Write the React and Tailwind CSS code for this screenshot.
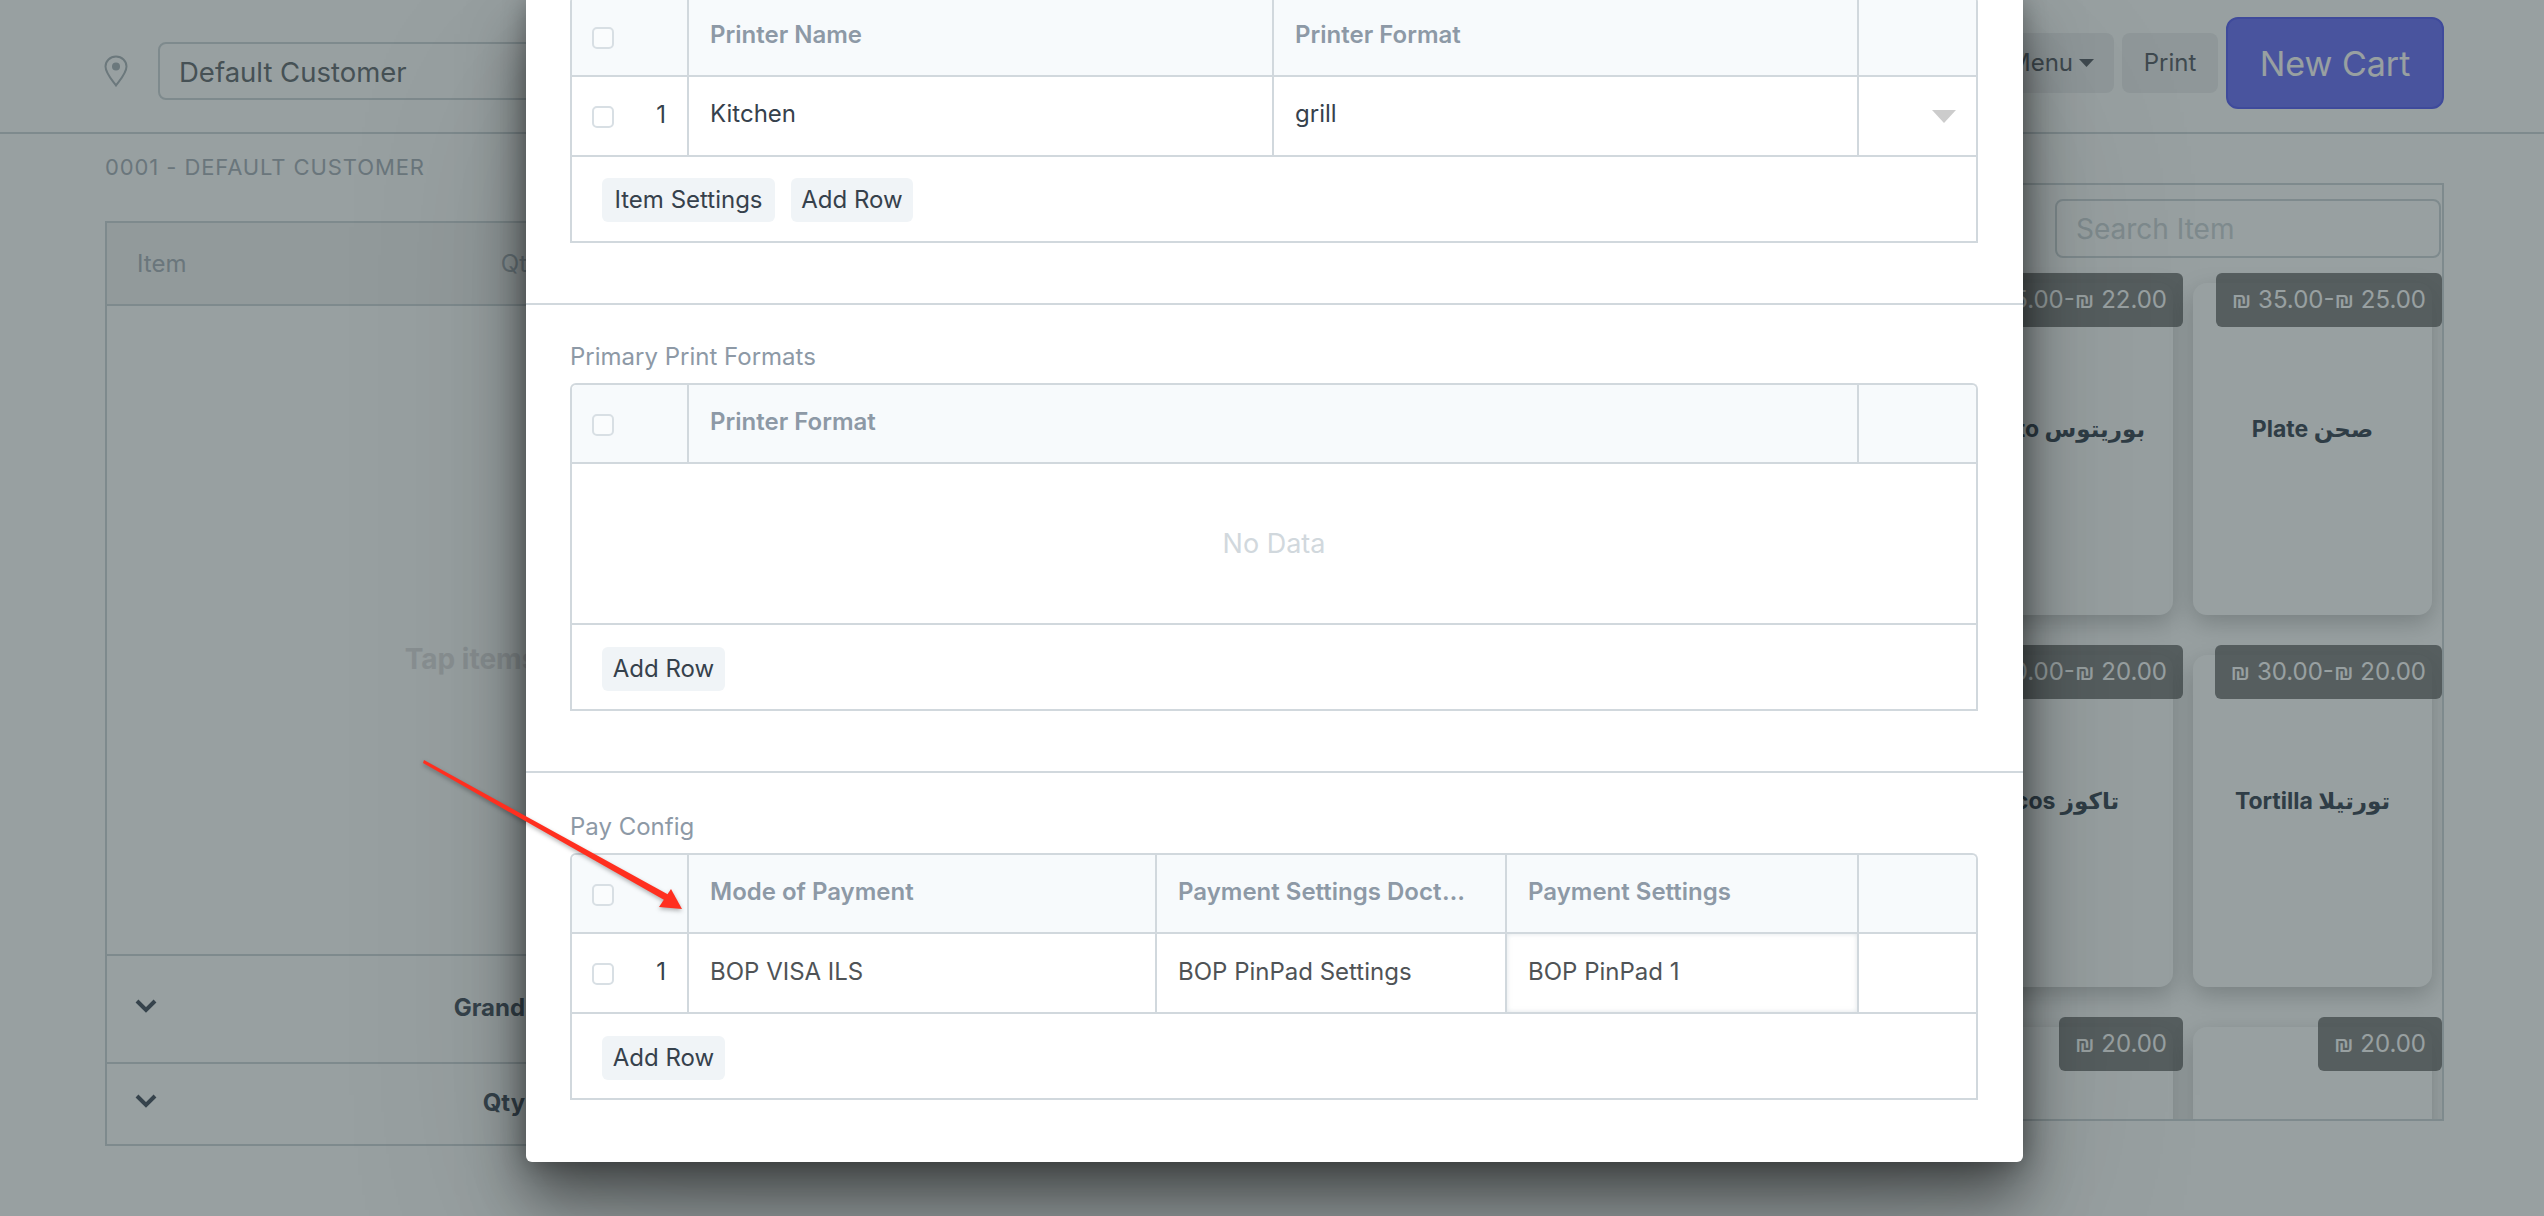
const rows = [
  ["₪ 35.00-₪ 22.00", "Burrito بوريتوس", "₪ 35.00-₪ 25.00", "Plate صحن"],
  ["₪ 30.00-₪ 20.00", "Tacos تاكوز", "₪ 30.00-₪ 20.00", "Tortilla تورتيلا"],
  ["₪ 20.00", "", "₪ 20.00", ""],
];

function Checkbox() {
  return <span className="block mt-[2px] w-[22px] h-[22px] rounded-[5px] border-2 border-[#d8dfe4] bg-white/40" />;
}

function HeaderCell({ width, children }) {
  return (
    <div style={{ width }} className="shrink-0 flex items-center pl-[21px] pr-[34px] pb-[4px] border-r-2 border-[#d1d8dd] font-semibold text-[#8d99a6]">
      <span className="truncate">{children}</span>
    </div>
  );
}

function BodyCell({ width, children, dark, focused }) {
  return (
    <div
      style={{ width }}
      className={`shrink-0 flex items-center px-[21px] border-r-2 border-[#d1d8dd] ${dark ? "pb-[4px] text-[#36414c]" : "pb-[2px] text-[#4f5356]"} ${focused ? "shadow-[inset_0_0_5px_rgba(209,216,221,0.7)]" : ""}`}
    >
      <span className="truncate">{children}</span>
    </div>
  );
}

function GridTable({ cols, headers, row, dark, children, footer }) {
  return (
    <div className="text-[24px]">
      <div className="rounded-t-[6px] border-2 border-b-0 border-[#d1d8dd]">
        <div className="flex h-[79px] bg-[#f7fafc] border-b-2 border-[#d1d8dd] rounded-t-[5px]">
          <div className="w-[117px] shrink-0 flex items-center pl-[20px] border-r-2 border-[#d1d8dd]">
            <Checkbox />
          </div>
          {headers.map((h, i) => (
            <HeaderCell key={h} width={cols[i]}>{h}</HeaderCell>
          ))}
          <div className="flex-1" />
        </div>
        {row && (
          <div className="flex h-[80px] border-b-2 border-[#d1d8dd]">
            <div className="w-[117px] shrink-0 flex items-center justify-between pl-[20px] pr-[21px] border-r-2 border-[#d1d8dd] text-[#36414c]">
              <Checkbox />
              <span className="pb-[2px]">1</span>
            </div>
            {row.map((c, i) => (
              <BodyCell key={c} width={cols[i]} dark={dark} focused={!dark && i === 2}>{c}</BodyCell>
            ))}
            <div className="flex-1 flex items-center justify-end pr-[20px]">
              {dark && (
                <svg width="24" height="13" viewBox="0 0 24 13">
                  <path d="M0 0h24L12 13z" fill="#cccccc" />
                </svg>
              )}
            </div>
          </div>
        )}
        {children}
      </div>
      <div className={`h-[86px] pl-[30px] flex gap-[16px] items-start border-2 border-t-0 border-[#d1d8dd] ${dark ? "pt-[21px]" : "pt-[22px]"}`}>
        {footer.map((b) => (
          <button key={b.label} style={{ width: b.width }} className="h-[44px] rounded-[6px] bg-[#f0f4f7] text-[#36414c] text-[24px] whitespace-nowrap">{b.label}</button>
        ))}
      </div>
    </div>
  );
}

function Card({ price, name }) {
  return (
    <div className="relative w-[239px] h-[332px] shrink-0 rounded-[14px] bg-white shadow-[0_8px_24px_rgba(0,0,0,0.22)]">
      <div className="absolute -top-[10px] -right-[10px] h-[54px] px-[16px] flex items-center rounded-[6px] bg-[#707070]/80 text-white text-[24px] whitespace-nowrap">
        {price}
      </div>
      <div className="pt-[129px] text-center font-bold text-[23px] text-[#4b5563]">{name}</div>
    </div>
  );
}

function Chevron() {
  return (
    <svg width="22" height="14" viewBox="0 0 22 14" className="shrink-0 mb-[4px]">
      <path d="M2 2l9 9 9-9" fill="none" stroke="currentColor" strokeWidth="4" />
    </svg>
  );
}

export default function App() {
  return (
    <div className="relative h-screen overflow-hidden bg-white font-[Inter,'DejaVu_Sans',sans-serif]">
      {/* page under the dialog */}
      <div className="flex items-center h-[134px] pl-[104px] pr-[100px] border-b-2 border-[#d2d9dc]">
        <div className="flex items-center mt-[10px]">
          <svg width="24" height="32" viewBox="0 0 24 32" className="shrink-0 text-[#b2babf]">
            <path d="M12 1.5C6 1.5 1.5 6 1.5 11.5 1.5 18 8 25 12 30.5 16 25 22.5 18 22.5 11.5 22.5 6 18 1.5 12 1.5z" fill="none" stroke="currentColor" strokeWidth="2" />
            <circle cx="12" cy="11.5" r="4" fill="currentColor" />
          </svg>
          <div className="ml-[30px] w-[800px] h-[58px] flex items-center px-[19px] pt-[3px] rounded-[8px] border-2 border-[#d2d9dc] text-[27.5px] text-[#72777c]">Default Customer</div>
        </div>
        <div className="flex-1" />
        <div className="flex items-center mb-[6px]">
          <button className="h-[60px] px-[20px] flex items-center rounded-[8px] bg-[#eff0f1] text-[24px] text-[#666a72]">
            Menu
            <svg width="15" height="8" viewBox="0 0 15 8" className="ml-[6px]"><path d="M0 0h15L7.5 8z" fill="currentColor" /></svg>
          </button>
          <button className="ml-[8px] w-[96px] h-[60px] rounded-[8px] bg-[#eff0f1] text-[24px] text-[#666a72]">Print</button>
          <button className="ml-[8px] w-[218px] h-[92px] rounded-[12px] bg-[#787cfa] border-2 border-[#666cf5] text-[34px] text-white">New Cart</button>
        </div>
      </div>
      <div className="flex pl-[105px] pr-[100px] gap-[40px]">
        <div className="w-[808px] shrink-0">
          <div className="h-[64px] pt-[17px] text-[22px] tracking-[0.9px] text-[#b0b7bf]">0001 - DEFAULT CUSTOMER</div>
          <div className="mt-[23px] h-[925px] flex flex-col border-2 border-[#d2d9dc]">
            <div className="h-[83px] flex justify-between items-center px-[30px] border-b-2 border-[#d2d9dc] bg-[#f5f5f5] text-[24px] text-[#b0b7bf]">
              <span>Item</span>
              <span className="mr-[340px]">Qty</span>
            </div>
            <div className="flex-1 flex items-center justify-center pt-[58px] pl-[16px] font-bold text-[28px] text-[#e4e2e4]">Tap items to add</div>
            <div className="h-[108px] flex items-center pl-[28px] pb-[3px] border-t-2 border-[#d2d9dc] font-bold text-[24px] text-[#565f6d]">
              <Chevron />
              <span className="ml-[287px] w-[145px] text-right">Grand Total</span>
            </div>
            <div className="h-[82px] flex items-center pl-[28px] pb-[2px] border-t-2 border-[#d2d9dc] font-bold text-[24px] text-[#565f6d]">
              <Chevron />
              <span className="ml-[287px] w-[145px] text-right">Qty Total</span>
            </div>
          </div>
        </div>
        <div className="flex-1 mt-[49px] h-[938px] overflow-hidden border-2 border-[#d2d9dc]">
          <div className="flex justify-end pr-[1px] pt-[14px]">
            <div className="w-[386px] h-[59px] flex items-center px-[19px] rounded-[8px] border-2 border-[#d2d9dc] text-[28px] text-[#d2d9dc]">Search Item</div>
          </div>
          <div className="flex flex-col gap-[40px] pt-[25px] pr-[10px]">
            {rows.map((r) => (
              <div key={r[0] + r[1]} className="flex justify-end gap-[20px]">
                <Card price={r[0]} name={r[1]} />
                <Card price={r[2]} name={r[3]} />
              </div>
            ))}
          </div>
        </div>
      </div>

      {/* backdrop */}
      <div className="absolute inset-0 bg-[#0a1d1f]/42" />

      {/* dialog, scrolled so its top is cut off */}
      <div className="absolute top-0 left-[526px] w-[1497px] h-[1162px] overflow-hidden rounded-b-[6px] bg-white shadow-[0_34px_60px_rgba(0,0,0,0.5),0_0_24px_rgba(0,0,0,0.3),0_80px_200px_rgba(0,0,0,0.12)]">
        <div className="pl-[44px] pr-[45px] -mt-[4px] pb-[60px]">
          <GridTable
            cols={[585, 585]}
            headers={["Printer Name", "Printer Format"]}
            row={["Kitchen", "grill"]}
            dark
            footer={[{ label: "Item Settings", width: 173 }, { label: "Add Row", width: 122 }]}
          />
        </div>
        <div className="border-t-2 border-[#d1d8dd] pl-[44px] pr-[45px] pt-[34px] pb-[60px]">
          <div className="h-[44px] text-[24px] text-[#8d99a6]">Primary Print Formats</div>
          <GridTable cols={[1170]} headers={["Printer Format"]} footer={[{ label: "Add Row", width: 123 }]}>
            <div className="h-[161px] flex items-center justify-center pt-[2px] border-b-2 border-[#d1d8dd] text-[27px] text-[#d1d8dd]">No Data</div>
          </GridTable>
        </div>
        <div className="border-t-2 border-[#d1d8dd] pl-[44px] pr-[45px] pt-[36px]">
          <div className="h-[44px] text-[24px] text-[#8d99a6]">Pay Config</div>
          <GridTable
            cols={[468, 350, 352]}
            headers={["Mode of Payment", "Payment Settings Doctype", "Payment Settings"]}
            row={["BOP VISA ILS", "BOP PinPad Settings", "BOP PinPad 1"]}
            footer={[{ label: "Add Row", width: 123 }]}
          />
        </div>
      </div>

      {/* red annotation arrow */}
      <svg className="absolute top-[755px] left-[418px] pointer-events-none drop-shadow-[0_2px_2px_rgba(0,0,0,0.3)]" width="275" height="165" viewBox="418 755 275 165">
        <path d="M424 760L669 895l-3 6L423 763z" fill="#ff2f1f" />
        <path d="M682 909L659 907 671 889z" fill="#ff2f1f" />
      </svg>
    </div>
  );
}
